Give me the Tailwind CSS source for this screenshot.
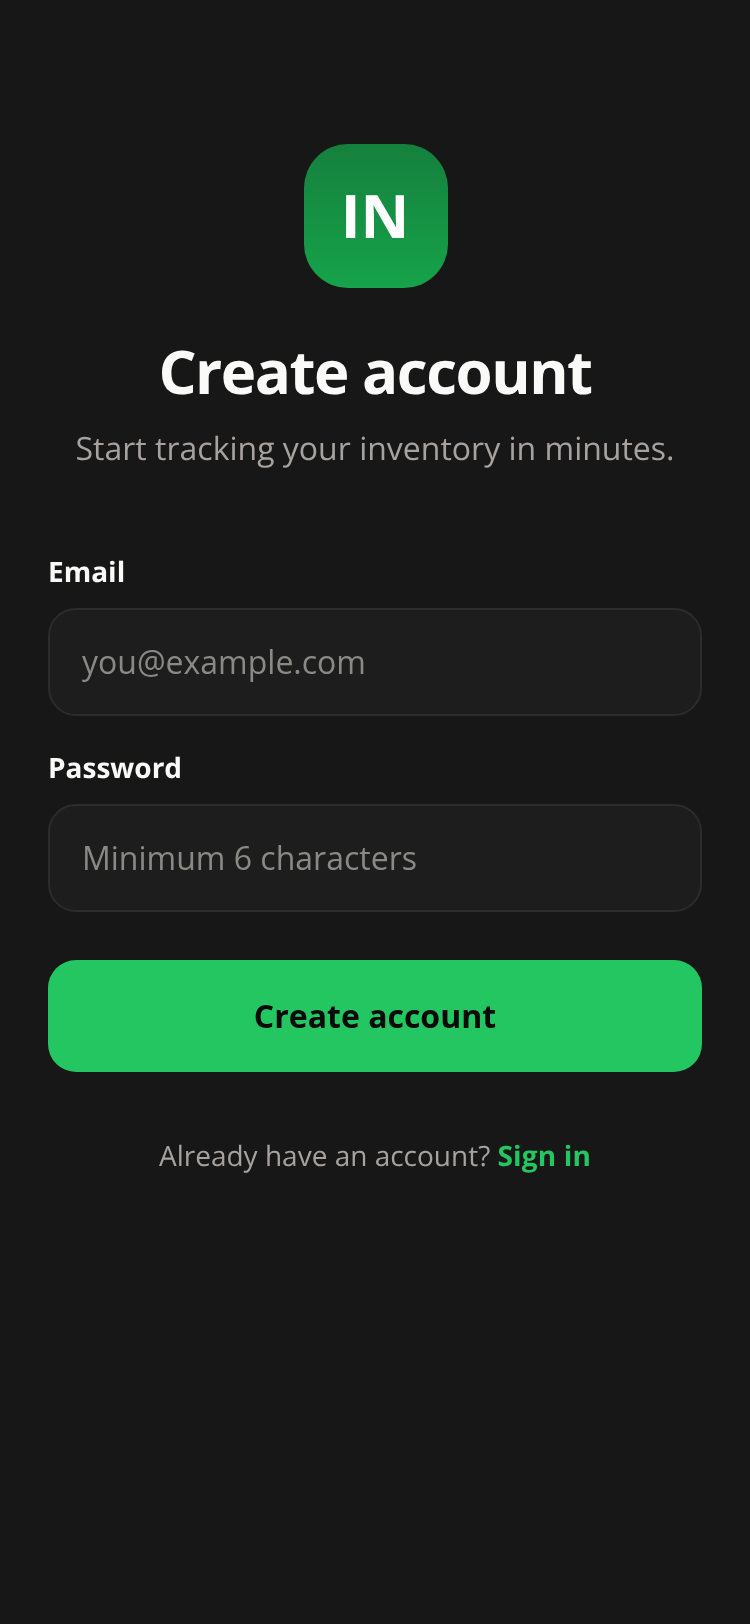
<!DOCTYPE html>
<html lang="en">

<head>
    <meta charset="UTF-8">
    <meta name="viewport" content="width=device-width, initial-scale=1.0">
    <title>Create account</title>
    <script src="https://cdn.jsdelivr.net/npm/@tailwindcss/browser@4"></script>
</head>

<body class="min-h-screen bg-[#171717] text-[#fafaf9] font-['Open_Sans',sans-serif] [text-rendering:geometricPrecision]">
    <main class="flex flex-col px-12 pt-36 [will-change:transform]">
        <div class="flex flex-col items-center">
            <div class="ml-0.5 flex h-36 w-36 items-center justify-center rounded-[44px] bg-gradient-to-b from-[#15803d] to-[#16a34a] pr-0.5 pb-0.5">
                <span class="text-[60px] leading-none font-bold text-white">IN</span>
            </div>
            <h1 class="mt-[43px] text-[60px] leading-[80px] font-bold tracking-[-1.5px]">Create account</h1>
            <p class="mt-[16px] text-[32px] leading-[44px] text-[#a8a29e]">Start tracking your inventory in minutes.</p>
        </div>

        <form class="mt-[82px] flex flex-col">
            <label class="text-[28px] leading-[38px] font-bold" for="email">Email</label>
            <input id="email" type="email" placeholder="you@example.com" class="mt-[17px] h-[108px] w-full rounded-[28px] border-2 border-[#2c2c2c] bg-[#1d1d1d] px-8 pb-0.5 text-[32px] placeholder:text-[#8a8a85]">

            <label class="mt-[33px] text-[28px] leading-[38px] font-bold" for="password">Password</label>
            <input id="password" type="text" placeholder="Minimum 6 characters" class="mt-[17px] h-[108px] w-full rounded-[28px] border-2 border-[#2c2c2c] bg-[#1d1d1d] px-8 pb-0.5 text-[32px] placeholder:text-[#8a8a85]">

            <button type="button" class="mt-[48px] h-[112px] w-full rounded-[28px] bg-[#24c661] text-[32px] font-bold text-[#0a0a0a]">Create account</button>
        </form>

        <p class="mt-[64px] text-center text-[28px] leading-[40px] text-[#a8a29e]">Already have an account? <a href="#" class="font-bold tracking-[0.15px] text-[#24c661]">Sign in</a></p>
    </main>
</body>

</html>
